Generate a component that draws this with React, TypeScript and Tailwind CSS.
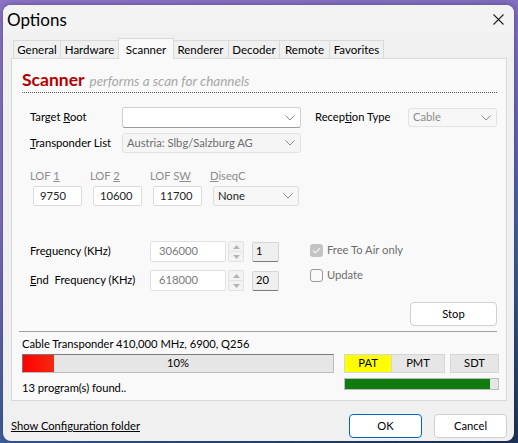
import React from "react";

const ui = "font-['Lato','Noto_Sans',sans-serif]";

function Chevron({ color = "#8a8a8a" }: { color?: string }) {
  return (
    <svg width="10" height="6" viewBox="0 0 10 6" className="shrink-0">
      <path d="M0.5 0.5 L5 5 L9.5 0.5" fill="none" stroke={color} strokeWidth="1" />
    </svg>
  );
}

type ComboProps = {
  value: string;
  className: string;
  textClass?: string;
};

function Combo({ value, className, textClass = "text-black" }: ComboProps) {
  return (
    <div className={`flex items-center justify-between rounded-[3px] border pl-[4px] pr-[5px] ${className}`}>
      <span className={`truncate text-[11.2px] ${textClass}`}>{value}</span>
      <Chevron />
    </div>
  );
}

function Spinner() {
  return (
    <div className="ml-[2px] flex h-[21px] w-[16px] flex-col">
      <div className="flex flex-1 items-center justify-center rounded-t-[2px] border border-[#e2e2e2] bg-[#f3f3f3]">
        <svg width="7" height="4" viewBox="0 0 7 4">
          <path d="M0 4 L3.5 0 L7 4Z" fill="#b4b4b4" />
        </svg>
      </div>
      <div className="flex flex-1 items-center justify-center rounded-b-[2px] border border-t-0 border-[#e2e2e2] bg-[#f3f3f3]">
        <svg width="7" height="4" viewBox="0 0 7 4">
          <path d="M0 0 L3.5 4 L7 0Z" fill="#b4b4b4" />
        </svg>
      </div>
    </div>
  );
}

function FreqRow({ label, value, step }: { label: React.ReactNode; value: string; step: string }) {
  return (
    <div className="flex items-center">
      <div className="w-[128px] whitespace-nowrap pl-[8px] text-[11.2px] text-black">{label}</div>
      <div className="flex h-[21px] w-[76px] items-center rounded-[2px] border border-[#e0e0e0] bg-white pl-[8px] text-[11.2px] text-[#7a7a7a]">
        {value}
      </div>
      <Spinner />
      <div className="ml-[8px] flex h-[20px] w-[27px] items-center rounded-[2px] border border-[#d6d6d6] border-b-[#7a7a7a] bg-[#efefef] pl-[3px] text-[11.2px] text-black">
        {step}
      </div>
    </div>
  );
}

function Tab({ label, w, active }: { label: string; w: string; active?: boolean }) {
  if (active) {
    return (
      <div className={`relative z-10 -mb-px -mx-[1px] flex h-[21px] ${w} justify-center border border-b-0 border-[#d9d9d9] bg-[#f9f9f9] pt-[2px] text-[11.5px] text-black`}>
        {label}
      </div>
    );
  }
  return (
    <div className={`flex h-[18px] ${w} items-center justify-center border border-b-0 border-l-0 border-[#d9d9d9] bg-[#f0f0f0] text-[11.5px] text-black first:border-l`}>
      {label}
    </div>
  );
}

function LofField({ label, value, w = "w-[49px]" }: { label: React.ReactNode; value: string; w?: string }) {
  return (
    <div className="flex flex-col">
      <div className="-ml-[3px] h-[18px] text-[11.2px] text-[#8c8c8c]">{label}</div>
      <div className={`flex h-[20px] ${w} items-center rounded-[2px] border border-[#dcdcdc] bg-white pl-[6px] text-[11.2px] text-[#222]`}>
        {value}
      </div>
    </div>
  );
}

export default function App() {
  return (
    <div className={`h-[443px] w-[518px] overflow-hidden bg-[linear-gradient(160deg,#8d74c9_0%,#7f6fc2_35%,#3f5f9e_70%,#1d3257_100%)] pt-[5px] pl-[3px] ${ui}`}>
      <div className="flex h-[436px] w-[511px] flex-col overflow-hidden rounded-[8px] bg-[#f0f0f0] shadow-[0_0_6px_rgba(0,0,0,0.35)]">
        {/* title bar */}
        <div className="flex h-[28px] shrink-0 items-center justify-between bg-[#f3f3f4] pl-[4px] pr-[10px]">
          <span className="text-[17px] leading-none text-black">Options</span>
          <svg width="11" height="11" viewBox="0 0 11 11">
            <path d="M0.5 0.5 L10.5 10.5 M10.5 0.5 L0.5 10.5" stroke="#222" strokeWidth="1.1" />
          </svg>
        </div>

        {/* tabs */}
        <div className="mt-[5px] flex h-[20px] shrink-0 items-end pl-[10px]">
          <Tab label="General" w="w-[48px]" />
          <Tab label="Hardware" w="w-[58px]" />
          <Tab label="Scanner" w="w-[56px]" active />
          <Tab label="Renderer" w="w-[56px]" />
          <Tab label="Decoder" w="w-[51px]" />
          <Tab label="Remote" w="w-[50px]" />
          <Tab label="Favorites" w="w-[54px]" />
        </div>

        {/* scanner page */}
        <div className="ml-[8px] h-[343px] w-[496px] shrink-0 overflow-hidden border border-[#d9d9d9] bg-[#f9f9f9] pl-[10px]">
          <div className="flex h-[34px] w-[475px] items-end gap-[5px] border-b border-dotted border-[#555] pb-[4px]">
            <span className="text-[17.5px] font-bold leading-none text-[#b40000]">Scanner</span>
            <span className="text-[13.5px] italic leading-none text-[#a8a8a8]">performs a scan for channels</span>
          </div>

          <div className="mt-[14px] flex items-center">
            <div className="w-[100px] pl-[8px] text-[11.2px] text-black">
              Target <u>R</u>oot
            </div>
            <Combo value="" className="h-[21px] w-[179px] border-[#cfcfcf] border-b-[#9a9a9a] bg-white" />
            <div className="ml-[14px] w-[93px] text-[11.2px] text-black">
              Recep<u>t</u>ion Type
            </div>
            <Combo value="Cable" className="h-[19px] w-[89px] border-[#e2e2e2] bg-[#f7f7f7]" textClass="text-[#8c8c8c]" />
          </div>

          <div className="mt-[5px] flex items-center">
            <div className="w-[100px] whitespace-nowrap pl-[8px] text-[11.2px] text-black">
              <u>T</u>ransponder List
            </div>
            <Combo value="Austria: Slbg/Salzburg AG" className="h-[20px] w-[179px] border-[#e2e2e2] bg-[#f5f5f5]" textClass="text-[#6d6d6d]" />
          </div>

          <div className="mt-[15px] flex gap-[11px] pl-[11px]">
            <LofField label={<>LOF <u>1</u></>} value="9750" />
            <LofField label={<>LOF <u>2</u></>} value="10600" />
            <LofField label={<>LOF S<u>W</u></>} value="11700" />
            <div className="flex flex-col">
              <div className="-ml-[3px] h-[18px] text-[11.2px] text-[#8c8c8c]">
                <u>D</u>iseqC
              </div>
              <Combo value="None" className="h-[20px] w-[86px] border-[#dcdcdc] bg-[#f7f7f7]" textClass="text-[#222]" />
            </div>
          </div>

          <div className="mt-[35px] flex">
            <div className="flex flex-col gap-[8px]">
              <FreqRow label={<>Fre<u>q</u>uency (KHz)</>} value="306000" step="1" />
              <FreqRow label={<><u>E</u>nd&nbsp; Frequency (KHz)</>} value="618000" step="20" />
            </div>
            <div className="ml-[31px] mt-[1px] flex flex-col gap-[9px]">
              <label className="flex h-[16px] items-center gap-[4px] text-[11.2px] text-[#6d6d6d]">
                <span className="flex h-[13px] w-[13px] items-center justify-center rounded-[3px] bg-[#c3c3c3]">
                  <svg width="9" height="7" viewBox="0 0 9 7">
                    <path d="M1 3.5 L3.5 6 L8 1" fill="none" stroke="#f2f2f2" strokeWidth="1.2" />
                  </svg>
                </span>
                Free To Air only
              </label>
              <label className="flex h-[16px] items-center gap-[4px] text-[11.2px] text-[#6d6d6d]">
                <span className="h-[13px] w-[13px] rounded-[3px] border border-[#9a9a9a] bg-[#f9f9f9]" />
                Update
              </label>
            </div>
          </div>

          <div className="mt-[11px] flex w-[475px] justify-end">
            <button className="h-[24px] w-[87px] rounded-[4px] border border-[#d0d0d0] bg-white text-[11.2px] text-black">
              Stop
            </button>
          </div>

          <div className="mt-[5px] -ml-[3px] h-px w-[478px] bg-[#a0a0a0]" />

          <div className="mt-[4px] text-[11.2px] leading-[16px] text-black">
            Cable Transponder 410,000 MHz, 6900, Q256
          </div>

          <div className="mt-[2px] flex">
            <div className="flex flex-col">
              <div className="relative h-[19px] w-[312px] border border-[#bcbcbc] border-t-[#7a7a7a] border-l-[#7a7a7a] bg-[#e6e6e6]">
                <div className="h-full w-[31px] bg-[linear-gradient(90deg,#ff0000,#f32a10)]" />
                <span className="absolute inset-0 flex items-center justify-center text-[11.2px] text-black">10%</span>
              </div>
              <div className="mt-[7px] text-[11.2px] leading-[16px] text-black">13 program(s) found..</div>
            </div>
            <div className="ml-[10px] flex flex-col">
              <div className="flex h-[19px]">
                <div className="flex w-[48px] items-center justify-center border border-[#d6d6d6] bg-[#ffff00] text-[11.2px] text-black">PAT</div>
                <div className="flex w-[53px] items-center justify-center border border-l-0 border-[#d6d6d6] bg-[#e6e6e6] text-[11.2px] text-black">PMT</div>
                <div className="ml-[5px] flex w-[49px] items-center justify-center border border-[#d6d6d6] bg-[#e6e6e6] text-[11.2px] text-black">SDT</div>
              </div>
              <div className="mt-[5px] flex h-[12px] w-[155px] border border-[#bcbcbc] bg-[#e6e6e6]">
                <div className="h-full w-[145px] bg-[#107c10]" />
              </div>
            </div>
          </div>
        </div>

        {/* footer */}
        <div className="mt-[13px] flex h-[24px] items-center pl-[8px] pr-[7px]">
          <span className="text-[11.2px] text-black underline">Show Configuration folder</span>
          <button className="ml-auto h-[24px] w-[73px] rounded-[4px] border border-[#0067c0] bg-white text-[11.2px] text-black">
            OK
          </button>
          <button className="ml-[12px] h-[24px] w-[73px] rounded-[4px] border border-[#d0d0d0] bg-white text-[11.2px] text-black">
            Cancel
          </button>
        </div>
      </div>
    </div>
  );
}
